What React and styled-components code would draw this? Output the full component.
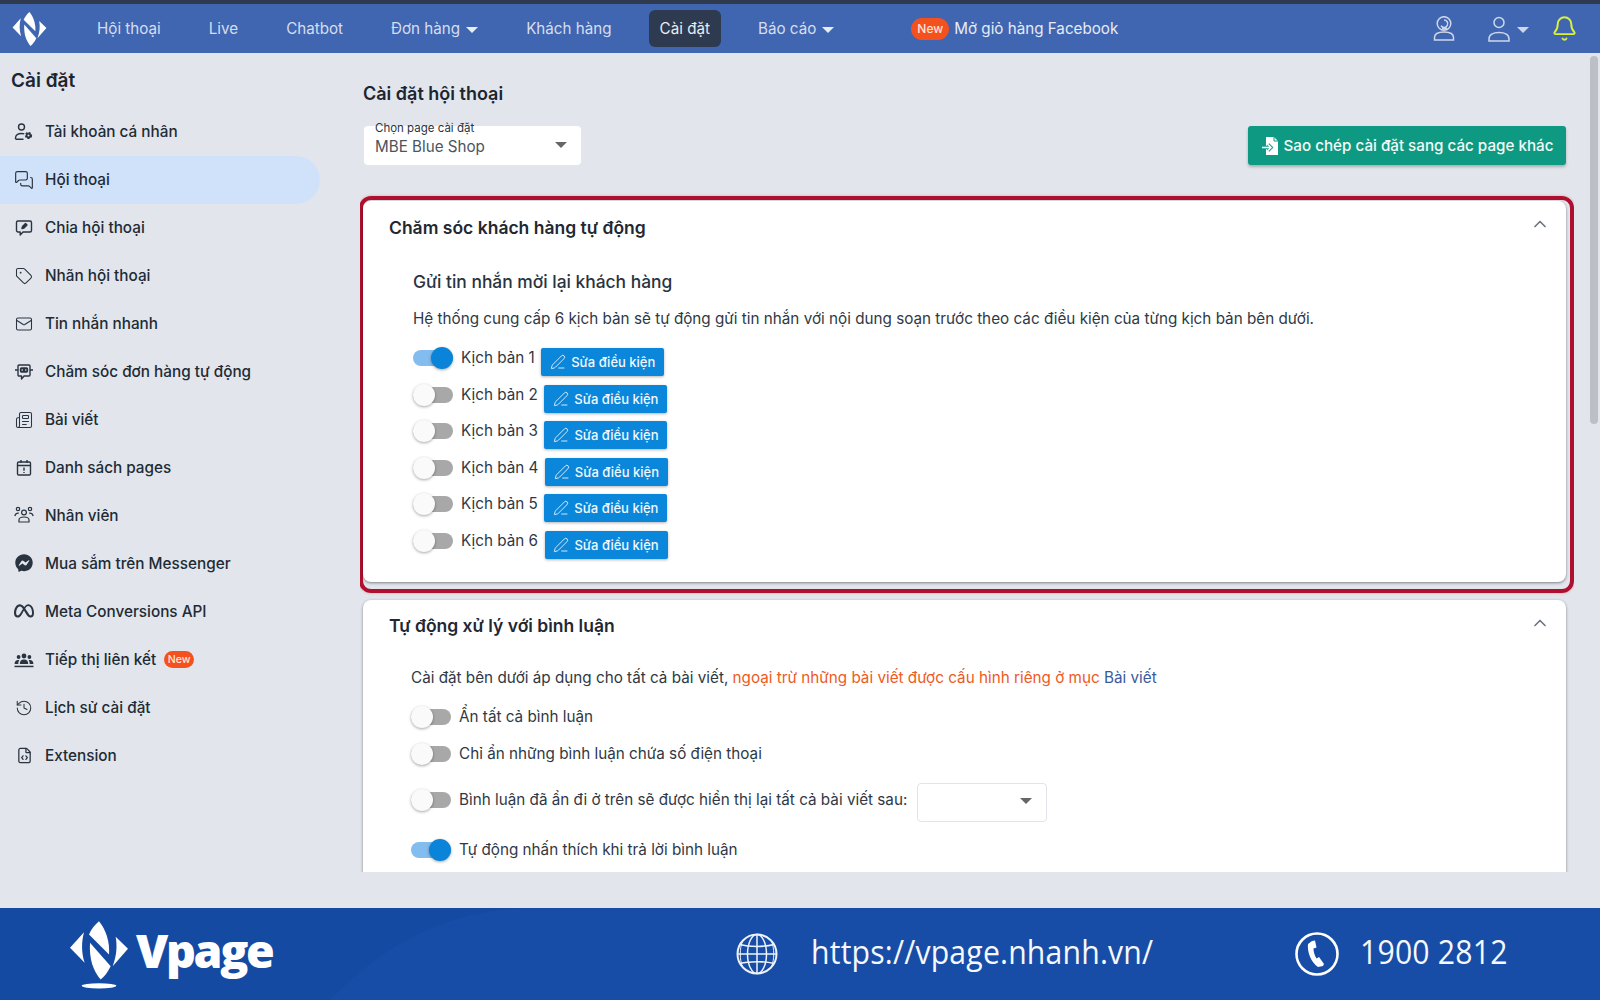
import React from "react";
import styled, { createGlobalStyle } from "styled-components";
import {
  MessagesSquare,
  Tag,
  Mail,
  Newspaper,
  History,
  FileCode,
  ChevronUp,
  PenLine,
  Bell
} from "lucide-react";
import { FaFacebookMessenger, FaMeta } from "react-icons/fa6";

const GlobalStyle = createGlobalStyle`
  html, body {
    margin: 0;
    padding: 0;
    background: #e2e6ec;
  }
  body {
    font-family: Inter, "Noto Sans", "Liberation Sans", sans-serif;
    color: #212b36;
  }
  * {
    box-sizing: border-box;
  }
`;

const Page = styled.div`
  width: 1600px;
  height: 1000px;
  display: flex;
  flex-direction: column;
  overflow: hidden;
`;

const TopStrip = styled.div`
  height: 4px;
  background: #2f3a4e;
`;

const NavBar = styled.nav`
  height: 49px;
  background: #4066b2;
  display: flex;
  align-items: center;
  padding-left: 12px;
  color: #d6deee;
  font-size: 15.2px;
`;

const NavItems = styled.div`
  display: flex;
  align-items: center;
  gap: 26px;
  margin-left: 39px;
`;

const NavItem = styled.div`
  height: 37px;
  padding: 0 11px;
  border-radius: 6px;
  display: flex;
  align-items: center;
  gap: 6px;
  background: ${props => (props.$active ? "#2d3a50" : "transparent")};
  color: ${props => (props.$active ? "#e8ecf3" : "inherit")};
`;

const Caret = styled.span`
  display: inline-block;
  width: 0;
  height: 0;
  margin-top: 2px;
  border-left: 6px solid transparent;
  border-right: 6px solid transparent;
  border-top: 6px solid ${props => props.$color || "#e8ecf3"};
`;

const SelectCaret = styled(Caret)`
  margin-top: -3px;
  border-top-color: #666;
`;

const Promo = styled.div`
  display: flex;
  align-items: center;
  gap: 5px;
  margin-left: 66px;
  color: #e6ebf5;
`;

const NewBadge = styled.span`
  display: inline-flex;
  align-items: center;
  justify-content: center;
  width: ${props => (props.$small ? 30 : 38)}px;
  height: ${props => (props.$small ? 17 : 22)}px;
  border-radius: 11px;
  background: #f4511e;
  color: #fde5da;
  font-size: ${props => (props.$small ? 10.5 : 12)}px;
  font-weight: 500;
`;

const NavTools = styled.div`
  display: flex;
  align-items: center;
  margin-left: auto;
  padding-right: 22px;
`;

const ToolIcon = styled.span`
  display: inline-flex;
  align-items: center;
  margin-left: ${props => props.$gap || 0}px;
  color: #cfd8ea;
`;

const Body = styled.div`
  flex: 1;
  min-height: 0;
  display: flex;
`;

const Sidebar = styled.aside`
  width: 340px;
  flex: none;
  padding-right: 20px;
`;

const SidebarTitle = styled.div`
  height: 55px;
  padding: 0 0 1px 11px;
  display: flex;
  align-items: center;
  font-size: 19px;
  font-weight: 600;
  color: #1c2530;
`;

const MenuItem = styled.div`
  height: ${props => (props.$tall ? 48.4 : 47.95)}px;
  display: flex;
  align-items: center;
  padding-left: 14px;
  border-radius: 0 24px 24px 0;
  background: ${props => (props.$active ? "#d0e2fa" : "transparent")};
  font-size: 15.3px;
  font-weight: 500;
  color: #212b36;
`;

const MenuIcon = styled.span`
  width: 20px;
  height: 20px;
  margin-right: 11px;
  display: inline-flex;
  align-items: center;
  justify-content: center;
  color: #2a3440;
  flex: none;
`;

const SideBadge = styled.span`
  margin-left: 8px;
  display: inline-flex;
`;

const Main = styled.main`
  width: 1214px;
  margin-left: 20px;
  margin-bottom: 36px;
  overflow: hidden;
  padding: 29px 8px 0 3px;
  flex: none;
`;

const PageTitle = styled.h1`
  margin: 0;
  font-size: 18px;
  line-height: 24px;
  font-weight: 600;
  color: #1c2530;
`;

const Toolbar = styled.div`
  margin-top: 20px;
  height: 39px;
  display: flex;
  justify-content: space-between;
  padding-left: 1px;
`;

const PageSelect = styled.div`
  position: relative;
  width: 217px;
  height: 39px;
  border-radius: 4px;
  background: #fff;
  display: flex;
  align-items: center;
  justify-content: space-between;
  padding: 1px 14px 0 11px;
  font-size: 15.2px;
  color: #4a5560;
`;

const FloatLabel = styled.span`
  position: absolute;
  left: 11px;
  top: -5px;
  font-size: 11.5px;
  line-height: 14px;
  color: #2a3440;
`;

const CopyButton = styled.button`
  width: 318px;
  height: 39px;
  border: 0;
  border-radius: 3px;
  background: #0e9a82;
  box-shadow: 0 2px 3px rgba(0, 0, 0, 0.25);
  color: #f3fbf9;
  font-family: inherit;
  font-size: 15.2px;
  font-weight: 500;
  display: flex;
  align-items: center;
  justify-content: center;
  gap: 5px;
`;

const Highlight = styled.div`
  margin: 31px -8px 0 -4px;
  border: 4px solid #b01030;
  border-radius: 12px;
  padding: 1px 4px 7px 0;
  box-shadow: 0 0 3px rgba(176, 16, 48, 0.3);
`;

const Card = styled.section`
  background: #fff;
  border-radius: 8px;
  box-shadow: 0 1px 3px rgba(0, 0, 0, 0.45);
  margin-top: ${props => props.$top || 0}px;
  padding: 14px 0 ${props => props.$padBottom || 0}px 26px;
  position: relative;
`;

const CardHead = styled.div`
  display: flex;
  align-items: center;
  justify-content: space-between;
  padding-right: 16px;
  height: 24px;
`;

const CardTitle = styled.h2`
  margin: 0;
  font-size: 17.5px;
  font-weight: 600;
  color: #1f2833;
`;

const Chevron = styled(ChevronUp)`
  margin-top: -6px;
  color: #6b7580;
`;

const CardBody = styled.div`
  padding-left: ${props => props.$indent}px;
  margin-top: ${props => props.$top}px;
`;

const SubTitle = styled.h3`
  margin: 0;
  font-size: 17.4px;
  line-height: 24px;
  font-weight: 500;
  color: #2a3440;
`;

const Paragraph = styled.p`
  margin: ${props => props.$top || 0}px 0 17px 0;
  font-size: 15.25px;
  line-height: 22px;
  color: #2f3945;
`;

const Scenario = styled.div`
  height: 36.6px;
  display: flex;
  align-items: flex-start;
`;

const OptionRow = styled.div`
  height: ${props => props.$height || 37}px;
  display: flex;
  align-items: flex-start;
`;

const Track = styled.span`
  position: relative;
  display: inline-block;
  width: 40px;
  height: 16px;
  margin: 3px 8px 3px 0;
  flex: none;
  border-radius: 8px;
  background: ${props => (props.$on ? "#83bcee" : "#a8a8a8")};
`;

const Thumb = styled.span`
  position: absolute;
  top: -3px;
  left: ${props => (props.$on ? "18px" : "0")};
  width: 22px;
  height: 22px;
  border-radius: 50%;
  background: ${props => (props.$on ? "#0a84d8" : "#fafafa")};
  box-shadow: 0 1px 3px rgba(0, 0, 0, 0.35);
`;

const OptionLabel = styled.span`
  font-size: 15.25px;
  line-height: 22px;
  color: #2f3945;
`;

const EditButton = styled.button`
  margin: 1px 0 0 6.5px;
  width: 123px;
  height: 28px;
  border: 0;
  border-radius: 2px;
  background: #0a86da;
  box-shadow: 0 1px 3px rgba(0, 0, 0, 0.3);
  color: #f2f8fd;
  font-family: inherit;
  font-size: 13px;
  font-weight: 500;
  display: flex;
  align-items: center;
  justify-content: center;
  gap: 5px;
`;

const Warn = styled.span`
  color: #ee5a24;
`;

const LinkText = styled.span`
  color: #3a5a9c;
`;

const InlineSelect = styled.div`
  width: 130px;
  height: 39px;
  margin: -6px 0 0 10px;
  border: 1px solid #e1e4e8;
  border-radius: 4px;
  display: flex;
  align-items: center;
  justify-content: flex-end;
  padding-right: 14px;
`;

const FakeScroll = styled.div`
  width: 12px;
  margin-left: auto;
  flex: none;
  padding: 3px 2px 0 2px;
`;

const ScrollThumb = styled.div`
  height: 368px;
  border-radius: 4px;
  background: #bcbfc4;
`;

const Footer = styled.footer`
  position: relative;
  height: 92px;
  flex: none;
  background: #154aa3;
  display: flex;
  align-items: center;
  padding-left: 69px;
  color: #fff;
  overflow: hidden;
`;

const FooterWave = styled.svg`
  position: absolute;
  left: 0;
  top: 0;
`;

const Brand = styled.div`
  position: relative;
  display: flex;
  align-items: center;
  width: 204px;
  height: 72px;
  flex: none;
`;

const BrandName = styled.span`
  margin: -8px 0 0 7px;
  font-family: "Open Sans", "Noto Sans", sans-serif;
  font-size: 46.5px;
  font-weight: 800;
  letter-spacing: -2.3px;
  line-height: 1;
`;

const Contact = styled.div`
  position: relative;
  display: flex;
  align-items: center;
  flex: none;
  margin-left: ${props => props.$left}px;
  font-family: "Open Sans", "Noto Sans", sans-serif;
  font-size: 33px;
  color: #f6f8fc;
`;

const ContactText = styled.span`
  margin: -5px 0 0 ${props => props.$gap}px;
  letter-spacing: 0.2px;
  transform: scaleX(0.915);
  transform-origin: left center;
`;

const MarkSvg = styled.svg`
  flex: none;
`;

const UserCog = () => (
  <svg width="20" height="20" viewBox="0 0 20 20" fill="none" stroke="currentColor" strokeWidth="1.4">
    <circle cx="7.5" cy="5" r="3" />
    <path d="M1.5 17v-1c0-3 2.5-4.5 6-4.5 1 0 2 .1 2.8.4M1.5 17.2h8" />
    <circle cx="14.5" cy="13.5" r="2.6" fill="currentColor" strokeWidth="2" strokeDasharray="2 1" />
    <circle cx="14.5" cy="13.5" r="1" fill="#e2e6ec" stroke="none" />
  </svg>
);

const ChatPen = () => (
  <svg width="18" height="18" viewBox="0 0 18 18" fill="none" stroke="currentColor" strokeWidth="1.4" strokeLinejoin="round">
    <path d="M3 2h12a1.5 1.5 0 0 1 1.5 1.5v8A1.5 1.5 0 0 1 15 13H8l-2.8 3v-3H3a1.5 1.5 0 0 1-1.5-1.5v-8A1.5 1.5 0 0 1 3 2z" />
    <path d="M7 9.5l.5-2 3-3 1.5 1.5-3 3z" fill="currentColor" />
  </svg>
);

const BotChat = () => (
  <svg width="20" height="20" viewBox="0 0 20 20" fill="none" stroke="currentColor" strokeWidth="1.4" strokeLinejoin="round">
    <path d="M5 3h10a1 1 0 0 1 1 1v9a1 1 0 0 1-1 1h-5l-2.5 3v-3H5a1 1 0 0 1-1-1V4a1 1 0 0 1 1-1z" />
    <rect x="6.5" y="6" width="7" height="4" rx="1" fill="currentColor" />
    <path d="M1 8h3M16 8h3" />
    <circle cx="8.2" cy="8" r=".8" fill="#e2e6ec" stroke="none" />
    <circle cx="11.8" cy="8" r=".8" fill="#e2e6ec" stroke="none" />
  </svg>
);

const CalendarAlert = () => (
  <svg width="18" height="18" viewBox="0 0 18 18" fill="none" stroke="currentColor" strokeWidth="1.4">
    <rect x="2.5" y="3" width="13" height="13" rx="1.2" />
    <path d="M2.5 6.5h13M6 1v3M12 1v3" />
    <path d="M9 8.5v3.2M9 13v1" />
  </svg>
);

const TeamIcon = () => (
  <svg width="20" height="20" viewBox="0 0 20 20" fill="none" stroke="currentColor" strokeWidth="1.2">
    <circle cx="10" cy="7.5" r="2.4" />
    <circle cx="4" cy="4" r="1.7" />
    <circle cx="16" cy="4" r="1.7" />
    <path d="M5 17v-2c0-2 2-3 5-3s5 1 5 3v2zM.8 11c.6-2 2-3 4-2.8M19.2 11c-.6-2-2-3-4-2.8" />
  </svg>
);

const AffiliateIcon = () => (
  <svg width="20" height="20" viewBox="0 0 20 20" fill="currentColor">
    <circle cx="10" cy="6" r="2.4" />
    <circle cx="4.6" cy="7" r="1.9" />
    <circle cx="15.4" cy="7" r="1.9" />
    <path d="M5.8 14c0-3 1.6-4.4 4.2-4.4s4.2 1.4 4.2 4.4z" />
    <path d="M.6 14c0-2.8 1.4-4 3.6-4 .5 0 .9.1 1.2.2C4.6 11 4.3 12.3 4.3 14zM19.4 14c0-2.8-1.4-4-3.6-4-.5 0-.9.1-1.2.2.8.8 1.1 2.1 1.1 3.8z" />
    <rect x="0.5" y="15.7" width="19" height="1.5" />
  </svg>
);

const HeadsetUser = () => (
  <svg width="22" height="25" viewBox="0 0 22 25" fill="none" stroke="currentColor" strokeWidth="1.5">
    <circle cx="11" cy="7.5" r="6.8" />
    <path d="M11 4a3.7 3.7 0 1 1-3 5.8" />
    <path d="M9 12.5h5" strokeWidth="2.2" />
    <path d="M1.5 24v-2.5c0-3.5 3-5.5 9.500-5.500s9.500 2 9.500 5.500v2.500z" />
  </svg>
);

const UserOutline = () => (
  <svg width="22" height="26" viewBox="0 0 22 26" fill="none" stroke="currentColor" strokeWidth="1.5">
    <circle cx="11" cy="6.5" r="5" />
    <path d="M1 25v-2c0-4 4-6.5 10-6.5s10 2.5 10 6.5v2z" />
  </svg>
);

const FileArrow = () => (
  <svg width="18" height="20" viewBox="0 0 18 20">
    <path d="M5 1h8l4 4v14H5z" fill="#fff" />
    <path d="M13 1v4h4" fill="none" stroke="#0e9a82" strokeWidth="1" />
    <path d="M1 11.5h9M7 8.5l3 3-3 3" fill="none" stroke="#0e9a82" strokeWidth="3.4" />
    <path d="M1 11.5h9M7 8.5l3 3-3 3" fill="none" stroke="#fff" strokeWidth="1.5" />
  </svg>
);

const LogoMark = ({ width, height, stand }) => (
  <MarkSvg width={width} height={height} viewBox={stand ? "55 42 180 206" : "55 42 180 182"} fill="#fff">
    <path d="M145 45C165 70 178 105 175 145L115 85C122 68 133 55 145 45Z" />
    <path d="M118 110L180 180C170 200 160 212 150 220C128 195 115 160 118 110Z" />
    <path d="M58 125L100 78C92 108 92 140 102 170Z" />
    <path d="M232 128L195 92C200 120 198 150 186 180Z" />
    {stand && <ellipse cx="145" cy="239" rx="52" ry="8" />}
  </MarkSvg>
);

const GlobeLines = () => (
  <svg width="42" height="42" viewBox="0 0 42 42" fill="none" stroke="#eef2f9" strokeWidth="1.5">
    <circle cx="21" cy="21" r="19.5" strokeWidth="2" />
    <ellipse cx="21" cy="21" rx="9.5" ry="19.5" />
    <path d="M21 1.5v39" />
    <path d="M4 11.5c9 2.5 25 2.5 34 0M1.500 21h39M4 30.500c9-2.500 25-2.500 34 0" />
    <path d="M6.500 8c-3 8-3 18 0 26M35.500 8c3 8 3 18 0 26" strokeWidth="1" />
  </svg>
);

const PhoneCircle = () => (
  <svg width="44" height="44" viewBox="0 0 44 44" fill="none" stroke="#fff">
    <ellipse cx="22" cy="22" rx="20.5" ry="20.5" strokeWidth="2.6" />
    <path
      d="M17 9l-4 3c-1 8 3 18 10 23l5-1 1-2-5-7-2.5 1.5c-2-3-3-7-3-10l3-1-1.5-7z"
      fill="#fff"
      stroke="none"
    />
  </svg>
);

const navItems = [
  { label: "Hội thoại" },
  { label: "Live" },
  { label: "Chatbot" },
  { label: "Đơn hàng", caret: true },
  { label: "Khách hàng" },
  { label: "Cài đặt", active: true },
  { label: "Báo cáo", caret: true }
];

const menuItems = [
  { label: "Tài khoản cá nhân", icon: <UserCog /> },
  { label: "Hội thoại", icon: <MessagesSquare size={20} strokeWidth={1.4} />, active: true },
  { label: "Chia hội thoại", icon: <ChatPen /> },
  { label: "Nhãn hội thoại", icon: <Tag size={18} strokeWidth={1.4} /> },
  { label: "Tin nhắn nhanh", icon: <Mail size={18} strokeWidth={1.4} /> },
  { label: "Chăm sóc đơn hàng tự động", icon: <BotChat /> },
  { label: "Bài viết", icon: <Newspaper size={18} strokeWidth={1.4} /> },
  { label: "Danh sách pages", icon: <CalendarAlert /> },
  { label: "Nhân viên", icon: <TeamIcon /> },
  { label: "Mua sắm trên Messenger", icon: <FaFacebookMessenger size={18} /> },
  { label: "Meta Conversions API", icon: <FaMeta size={20} /> },
  { label: "Tiếp thị liên kết", icon: <AffiliateIcon />, badge: true },
  { label: "Lịch sử cài đặt", icon: <History size={18} strokeWidth={1.4} /> },
  { label: "Extension", icon: <FileCode size={17} strokeWidth={1.8} /> }
];

const Toggle = ({ on }) => (
  <Track $on={on}>
    <Thumb $on={on} />
  </Track>
);

const App = () => (
  <Page>
    <GlobalStyle />
    <TopStrip />
    <NavBar>
      <LogoMark width={35} height={36} />
      <NavItems>
        {navItems.map(item => (
          <NavItem key={item.label} $active={item.active}>
            {item.label}
            {item.caret && <Caret />}
          </NavItem>
        ))}
      </NavItems>
      <Promo>
        <NewBadge>New</NewBadge>
        Mở giỏ hàng Facebook
      </Promo>
      <NavTools>
        <ToolIcon>
          <HeadsetUser />
        </ToolIcon>
        <ToolIcon $gap={33}>
          <UserOutline />
        </ToolIcon>
        <ToolIcon $gap={7}>
          <Caret $color="#cfd8ea" />
        </ToolIcon>
        <ToolIcon $gap={22}>
          <Bell size={27} strokeWidth={1.7} color="#d9f03c" />
        </ToolIcon>
      </NavTools>
    </NavBar>
    <Body>
      <Sidebar>
        <SidebarTitle>Cài đặt</SidebarTitle>
        {menuItems.map(item => (
          <MenuItem key={item.label} $active={item.active} $tall={item.badge}>
            <MenuIcon>{item.icon}</MenuIcon>
            {item.label}
            {item.badge && (
              <SideBadge>
                <NewBadge $small>New</NewBadge>
              </SideBadge>
            )}
          </MenuItem>
        ))}
      </Sidebar>
      <Main>
        <PageTitle>Cài đặt hội thoại</PageTitle>
        <Toolbar>
          <PageSelect>
            <FloatLabel>Chọn page cài đặt</FloatLabel>
            MBE Blue Shop
            <SelectCaret />
          </PageSelect>
          <CopyButton>
            <FileArrow />
            Sao chép cài đặt sang các page khác
          </CopyButton>
        </Toolbar>
        <Highlight>
          <Card $padBottom={15}>
            <CardHead>
              <CardTitle>Chăm sóc khách hàng tự động</CardTitle>
              <Chevron size={20} />
            </CardHead>
            <CardBody $indent={24} $top={31}>
              <SubTitle>Gửi tin nhắn mời lại khách hàng</SubTitle>
              <Paragraph $top={14}>
                Hệ thống cung cấp 6 kịch bản sẽ tự động gửi tin nhắn với nội dung soạn trước theo các điều kiện của từng kịch bản bên dưới.
              </Paragraph>
              {[1, 2, 3, 4, 5, 6].map(n => (
                <Scenario key={n}>
                  <Toggle on={n === 1} />
                  <OptionLabel>Kịch bản {n}</OptionLabel>
                  <EditButton>
                    <PenLine size={16} strokeWidth={1.3} />
                    Sửa điều kiện
                  </EditButton>
                </Scenario>
              ))}
            </CardBody>
          </Card>
        </Highlight>
        <Card $top={7} $padBottom={40}>
          <CardHead>
            <CardTitle>Tự động xử lý với bình luận</CardTitle>
            <Chevron size={20} />
          </CardHead>
          <CardBody $indent={22} $top={29}>
            <Paragraph>
              Cài đặt bên dưới áp dụng cho tất cả bài viết, <Warn>ngoại trừ những bài viết được cấu hình riêng ở mục</Warn>{" "}
              <LinkText>Bài viết</LinkText>
            </Paragraph>
            <OptionRow>
              <Toggle />
              <OptionLabel>Ẩn tất cả bình luận</OptionLabel>
            </OptionRow>
            <OptionRow $height={46}>
              <Toggle />
              <OptionLabel>Chỉ ẩn những bình luận chứa số điện thoại</OptionLabel>
            </OptionRow>
            <OptionRow $height={50}>
              <Toggle />
              <OptionLabel>Bình luận đã ẩn đi ở trên sẽ được hiển thị lại tất cả bài viết sau:</OptionLabel>
              <InlineSelect>
                <SelectCaret />
              </InlineSelect>
            </OptionRow>
            <OptionRow>
              <Toggle on />
              <OptionLabel>Tự động nhấn thích khi trả lời bình luận</OptionLabel>
            </OptionRow>
          </CardBody>
        </Card>
      </Main>
      <FakeScroll>
        <ScrollThumb />
      </FakeScroll>
    </Body>
    <Footer>
      <FooterWave width="1600" height="92" viewBox="0 0 1600 92">
        <path d="M330 92C380 40 440 5 520 0H1600V92Z" fill="#174da6" />
      </FooterWave>
      <Brand>
        <LogoMark width={60} height={69} stand />
        <BrandName>Vpage</BrandName>
      </Brand>
      <Contact $left={463}>
        <GlobeLines />
        <ContactText $gap={33}>https://vpage.nhanh.vn/</ContactText>
      </Contact>
      <Contact $left={110}>
        <PhoneCircle />
        <ContactText $gap={21}>1900 2812</ContactText>
      </Contact>
    </Footer>
  </Page>
);

export default App;
